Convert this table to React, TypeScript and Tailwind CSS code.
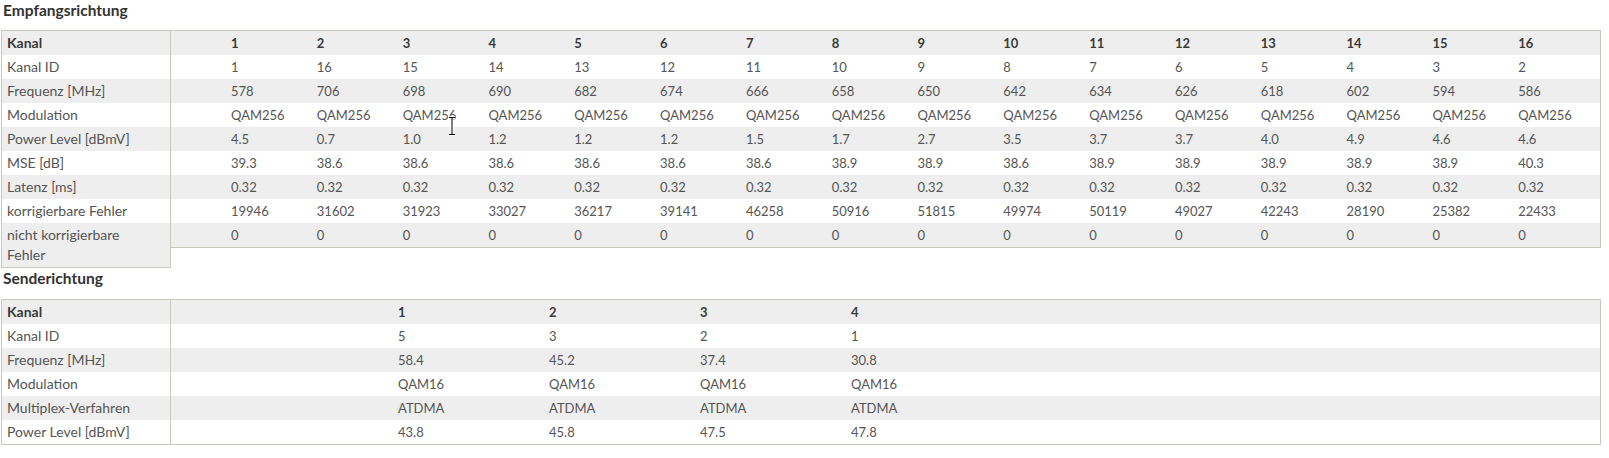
import React from 'react';

const font = { fontFamily: 'Lato, "Liberation Sans", sans-serif' };

const down = {
  labels: [
    'Kanal',
    'Kanal ID',
    'Frequenz [MHz]',
    'Modulation',
    'Power Level [dBmV]',
    'MSE [dB]',
    'Latenz [ms]',
    'korrigierbare Fehler',
    'nicht korrigierbare Fehler',
  ],
  rows: [
    ['1', '2', '3', '4', '5', '6', '7', '8', '9', '10', '11', '12', '13', '14', '15', '16'],
    ['1', '16', '15', '14', '13', '12', '11', '10', '9', '8', '7', '6', '5', '4', '3', '2'],
    ['578', '706', '698', '690', '682', '674', '666', '658', '650', '642', '634', '626', '618', '602', '594', '586'],
    Array(16).fill('QAM256'),
    ['4.5', '0.7', '1.0', '1.2', '1.2', '1.2', '1.5', '1.7', '2.7', '3.5', '3.7', '3.7', '4.0', '4.9', '4.6', '4.6'],
    ['39.3', '38.6', '38.6', '38.6', '38.6', '38.6', '38.6', '38.9', '38.9', '38.6', '38.9', '38.9', '38.9', '38.9', '38.9', '40.3'],
    Array(16).fill('0.32'),
    ['19946', '31602', '31923', '33027', '36217', '39141', '46258', '50916', '51815', '49974', '50119', '49027', '42243', '28190', '25382', '22433'],
    Array(16).fill('0'),
  ],
};

const up = {
  labels: ['Kanal', 'Kanal ID', 'Frequenz [MHz]', 'Modulation', 'Multiplex-Verfahren', 'Power Level [dBmV]'],
  rows: [
    ['1', '2', '3', '4'],
    ['5', '3', '2', '1'],
    ['58.4', '45.2', '37.4', '30.8'],
    ['QAM16', 'QAM16', 'QAM16', 'QAM16'],
    ['ATDMA', 'ATDMA', 'ATDMA', 'ATDMA'],
    ['43.8', '45.8', '47.5', '47.8'],
  ],
};

const LabelCol: React.FC<{ labels: string[] }> = ({ labels }) => (
  <div className="w-[170px] shrink-0 border border-[#c8c8c0]">
    {labels.map((l, i) => (
      <div
        key={i}
        className={`px-[5px] py-[2px] leading-5 ${i % 2 === 0 ? 'bg-[#eeeeee]' : 'bg-white'} ${
          i === 0 ? 'font-bold text-[#3a3a3a]' : ''
        }`}
      >
        {l === 'nicht korrigierbare Fehler' ? (
          <>
            nicht korrigierbare
            <br />
            Fehler
          </>
        ) : (
          l
        )}
      </div>
    ))}
  </div>
);

const App: React.FC = () => {
  return (
    <div className="w-[1609px] h-[458px] bg-white text-[14px] text-[#555555] overflow-hidden" style={font}>
      <div className="relative ml-px w-[1600px]">
        <h2 className="pl-[2px] leading-5 text-[15.5px] font-bold text-[#333333] mb-[10px]">Empfangsrichtung</h2>

        <div className="flex items-start">
          <LabelCol labels={down.labels} />
          <div className="flex-1 border-y border-r border-[#c8c8c0]">
            {down.rows.map((row, i) => (
              <div
                key={i}
                className={`grid grid-cols-[56px_repeat(16,minmax(0,1fr))] h-6 leading-6 text-[13px] ${
                  i % 2 === 0 ? 'bg-[#eeeeee]' : 'bg-white'
                } ${i === 0 ? 'font-bold text-[#3a3a3a]' : ''}`}
              >
                <div />
                {row.map((v, j) => (
                  <div key={j} className="pl-[4px]">
                    {v}
                  </div>
                ))}
              </div>
            ))}
          </div>
        </div>

        <h2 className="pl-[2px] leading-5 text-[15.5px] font-bold text-[#333333] mb-[11px]">Senderichtung</h2>

        <div className="flex items-start">
          <LabelCol labels={up.labels} />
          <div className="flex-1 border-y border-r border-[#c8c8c0]">
            {up.rows.map((row, i) => (
              <div
                key={i}
                className={`grid grid-cols-[223px_repeat(4,151px)_1fr] h-6 leading-6 text-[13px] ${
                  i % 2 === 0 ? 'bg-[#eeeeee]' : 'bg-white'
                } ${i === 0 ? 'font-bold text-[#3a3a3a]' : ''}`}
              >
                <div />
                {row.map((v, j) => (
                  <div key={j} className="pl-[4px]">
                    {v}
                  </div>
                ))}
                <div />
              </div>
            ))}
          </div>
        </div>

        {/* mouse cursor left in the screenshot */}
        <svg className="absolute left-[446px] top-[116px]" width="10" height="20" viewBox="0 0 10 20">
          <path d="M2 1.5h6M5 1.5v17M2 18.5h6" stroke="#fff" strokeWidth="3" fill="none" />
          <path d="M2 1.5h6M5 1.5v17M2 18.5h6" stroke="#000" strokeWidth="1" fill="none" />
        </svg>
      </div>
    </div>
  );
};

export default App;
